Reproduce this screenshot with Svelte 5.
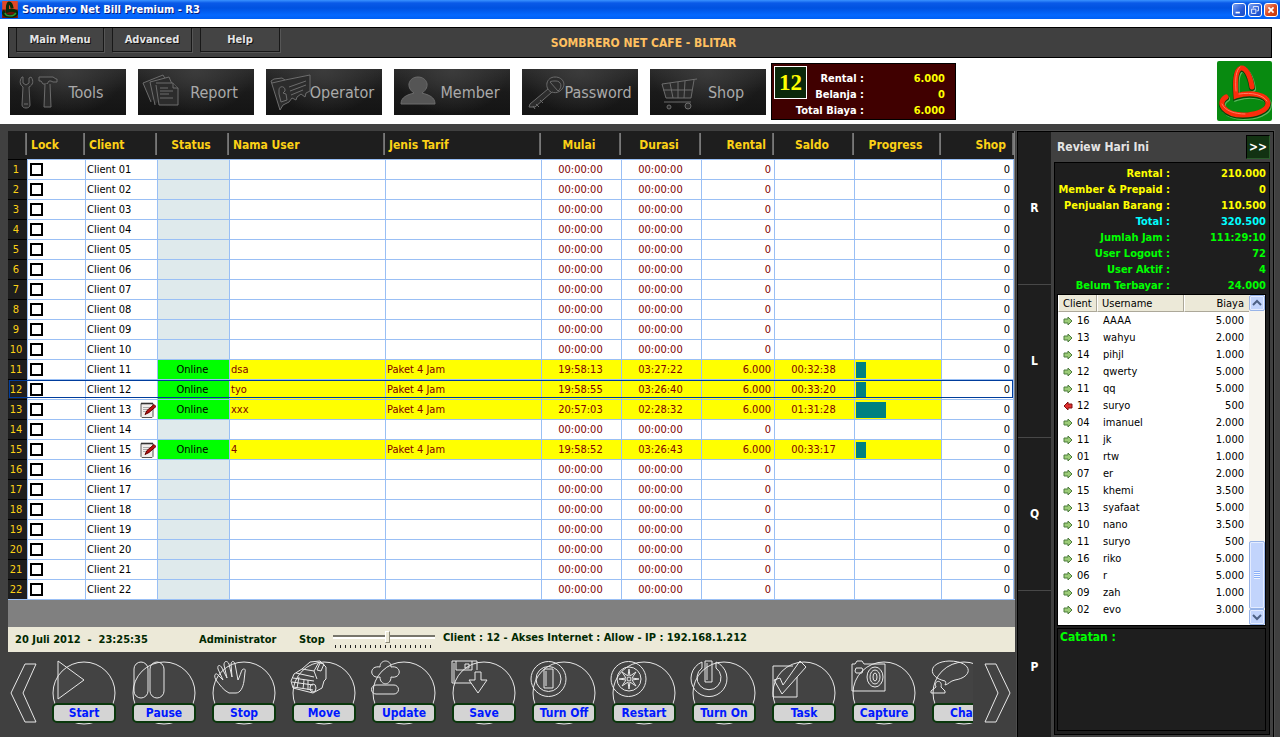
<script lang="ts">
	interface Client {
		lock: boolean;
		name: string;
		note: boolean;
		online: boolean;
		user: string;
		tarif: string;
		mulai: string;
		durasi: string;
		rental: string;
		saldo: string;
		progress: number;
	}

	const active: Record<number, Partial<Client>> = {
		11: { user: 'dsa', mulai: '19:58:13', durasi: '03:27:22', saldo: '00:32:38', progress: 12 },
		12: { user: 'tyo', mulai: '19:58:55', durasi: '03:26:40', saldo: '00:33:20', progress: 12 },
		13: {
			user: 'xxx',
			mulai: '20:57:03',
			durasi: '02:28:32',
			saldo: '01:31:28',
			progress: 36,
			note: true
		},
		15: {
			user: '4',
			mulai: '19:58:52',
			durasi: '03:26:43',
			saldo: '00:33:17',
			progress: 12,
			note: true
		}
	};

	const clients: Client[] = $state(
		Array.from({ length: 22 }, (_, i) => {
			const session = active[i + 1];
			return {
				lock: false,
				name: `Client ${String(i + 1).padStart(2, '0')}`,
				note: false,
				online: !!session,
				user: '',
				tarif: session ? 'Paket 4 Jam' : '',
				mulai: '00:00:00',
				durasi: '00:00:00',
				rental: session ? '6.000' : '0',
				saldo: '',
				progress: 0,
				...session
			};
		})
	);

	let selected = $state(12);
	let volume = $state(54);

	const menus = ['Main Menu', 'Advanced', 'Help'];

	const modules = [
		{
			label: 'Tools',
			paths: [
				'M12 8c-3 4-2 8 1 10l-1 18c0 4 8 4 8 0l-1-18c4-2 5-6 2-10l-2 1v5l-3 2-3-2V8z',
				'M14 35h4',
				'M29 8h14l3 2h1v3h-4l-2-1h-2l-2 3h-4l-2-3h-2z',
				'M35 15l-1 23h7l-1-23'
			]
		},
		{
			label: 'Report',
			paths: [
				'M13 33L5 14l20-8 4 7',
				'M17 36L12 13l19-5 3 7',
				'M18 14h17l5 5v17H21l-3-20',
				'M35 14v5h5M22 19h8M22 22h13M22 25h9M22 29h13'
			]
		},
		{
			label: 'Operator',
			paths: [
				'M5 12l3-2 8-1 3 2 25-5v16l-4 2-1 4-4-3-4 3-1 3-4-2-3 4-6 3-3 5L5 12z',
				'M6 14l13-3M13 21c0-5 7-4 6 1l-2 2 3 1 1 6-6 2-2-8zM23 18l17-6M24 22l16-6M25 26l12-5'
			]
		},
		{
			label: 'Member',
			paths: ['M7 35c0-7 6-9 13-11-9-6-5-16 4-16s13 10 4 16c7 2 13 4 13 11z']
		},
		{
			label: 'Password',
			paths: [
				'M29 23c-7-4-5-15 4-15 9 0 12 9 5 14-3 2-6 2-8 1L13 38l-6 0 1-3 18-15',
				'M28 13l8 9c5-4 3-10-2-10-3 0-5 0-6 1M14 35l3 3M18 31l3 3M11 37l2 3'
			]
		},
		{
			label: 'Shop',
			paths: [
				'M47 10L12 15l4 14h25l3-18M13 21h29M20 14l3 15M28 13v16M35 12l-1 17M14 33h27',
				'M17 38a2 2 0 1 0 4 0a2 2 0 1 0-4 0M35 37a3 3 0 1 0 6 0a3 3 0 1 0-6 0'
			]
		}
	];

	const actions = [
		{ label: 'Start', paths: ['M7 1v38l26-19z'] },
		{
			label: 'Pause',
			paths: [
				'M3 9a7 7 0 0 1 14 0v22a7 7 0 0 1-14 0z',
				'M19 9a7 7 0 0 1 14 0v22a7 7 0 0 1-14 0z'
			]
		},
		{
			label: 'Stop',
			paths: [
				'M18 33C12 30 9 25 5 20C2 15 5 12 7 15L12 20L7 9C6 5 9 4 11 8L16 18L13 5C13 1 16 0 18 4L21 17L20 4C21 0 23 1 24 4L27 20C29 16 30 12 31 10C33 8 35 9 34 12L33 21C32 28 29 33 25 33Z'
			]
		},
		{
			label: 'Move',
			paths: [
				'M11 9L19 2l10-1 6 6v12l-2 2-2 7-9 5-8-2-12-3-2-7 3-7z',
				'M11 9l12 2 5-9M23 11l3 8M26 10l3-7 4 1-3 7zM5 13l18 4M2 18l21 3M1 22l21 3M2 27l20 3',
				'M13 20l-1 9M17 20v10M8 17l-2 11M19 28a3 4 0 1 0 6 0a3 4 0 1 0-6 0'
			]
		},
		{
			label: 'Update',
			paths: [
				'M9 7C9-1 20-1 20 7C31 5 31 19 20 17C20 26 9 26 9 17C-2 19-2 5 9 7Z',
				'M5 25h18a4 4 0 0 1 0 9H5a4 4 0 0 1 0-9z'
			]
		},
		{
			label: 'Save',
			paths: [
				'M26 10V1H1v22h19',
				'M5 1v9h16V1M14 4h4v4h-4z',
				'M24 12h6v8h6l-9 13-9-13h6z',
				'M3 22V3'
			]
		},
		{
			label: 'Turn Off',
			paths: [
				'M0 19a17 17 0 1 0 35 0a17 17 0 1 0-35 0',
				'M5 19a12 12 0 1 0 25 0a12 12 0 1 0-25 0',
				'M13 9h9v19h-9zM15 11v15'
			]
		},
		{
			label: 'Restart',
			paths: [
				'M0 19a17 17 0 1 0 35 0a17 17 0 1 0-35 0',
				'M6 19a12 12 0 1 0 24 0a12 12 0 1 0-24 0',
				'M18 9l1 7 6-4-4 6 7 1-7 1 4 6-6-4-1 7-1-7-6 4 4-6-7-1 7-1-4-6 6 4z',
				'M16 19a2 2 0 1 0 4 0a2 2 0 1 0-4 0'
			]
		},
		{
			label: 'Turn On',
			paths: [
				'M11 2a18 18 0 1 0 14 0v6a12 12 0 1 1-14 0z',
				'M14 1h7v21h-7zM16 3v17'
			]
		},
		{
			label: 'Task',
			paths: ['M22 6H2v31h24V17', 'M29 1l6 6-24 27-8-14 6-2 3 7z']
		},
		{
			label: 'Capture',
			paths: [
				'M1 4h3l2-3h5l2 3h21v27H1z',
				'M5 8h6l1 2-1 3H5l-1-2z',
				'M16 17a8 10 0 1 0 16 0a8 10 0 1 0-16 0',
				'M19 17a5 7 0 1 0 10 0a5 7 0 1 0-10 0M22 17a2 4 0 1 0 4 0a2 4 0 1 0-4 0'
			]
		},
		{
			label: 'Chat',
			paths: [
				'M14 21C-4 17-3 2 18 1c24 0 25 16 6 19-5 1-6 4-10 5 1-2 1-3 0-4z',
				'M5 27c-3-7 7-8 5 0l4 4v2H0v-2z'
			]
		}
	];

	const stats = [
		{ label: 'Rental', value: '210.000', tone: 'yellow' },
		{ label: 'Member & Prepaid', value: '0', tone: 'yellow' },
		{ label: 'Penjualan Barang', value: '110.500', tone: 'yellow' },
		{ label: 'Total', value: '320.500', tone: 'cyan' },
		{ label: 'Jumlah Jam', value: '111:29:10', tone: 'green' },
		{ label: 'User Logout', value: '72', tone: 'green' },
		{ label: 'User Aktif', value: '4', tone: 'green' },
		{ label: 'Belum Terbayar', value: '24.000', tone: 'green' }
	];

	const bills = [
		['16', 'AAAA', '5.000'],
		['13', 'wahyu', '2.000'],
		['14', 'pihjl', '1.000'],
		['12', 'qwerty', '5.000'],
		['11', 'qq', '5.000'],
		['12', 'suryo', '500', 'back'],
		['04', 'imanuel', '2.000'],
		['11', 'jk', '1.000'],
		['01', 'rtw', '1.000'],
		['07', 'er', '2.000'],
		['15', 'khemi', '3.500'],
		['13', 'syafaat', '5.000'],
		['10', 'nano', '3.500'],
		['11', 'suryo', '500'],
		['16', 'riko', '5.000'],
		['06', 'r', '5.000'],
		['09', 'zah', '1.000'],
		['02', 'evo', '3.000']
	];

	const hat =
		'M35 26C33 13 28 6 24 7C18 9 18 22 19 35C34 30 51 34 51 42C51 50 38 54 26 54C8 54-1 42 9 36';
</script>

<div class="page">
	<header class="titlebar">
		<svg class="app-icon" viewBox="0 0 55 60" aria-hidden="true">
			<rect width="55" height="60" fill="#e04828" />
			<rect y="30" width="55" height="30" fill="#701408" />
			<path d={hat} stroke="#062c08" stroke-width="11" />
			<path d="M10 42c2 14 32 14 38 0" stroke="#2c9a35" stroke-width="5" />
		</svg>
		<h1>Sombrero Net Bill Premium - R3</h1>
		<div class="window-buttons">
			<button aria-label="Minimize">
				<svg viewBox="0 0 14 14"><path d="M3 10h5" stroke="#fff" stroke-width="2" /></svg>
			</button>
			<button aria-label="Restore">
				<svg viewBox="0 0 14 14">
					<path d="M5 5V3h6v5H9M3 6h5v5H3z" stroke="#fff" stroke-width="1" />
				</svg>
			</button>
			<button class="close" aria-label="Close">
				<svg viewBox="0 0 14 14">
					<path d="M4 4l6 6M10 4l-6 6" stroke="#fff" stroke-width="2" />
				</svg>
			</button>
		</div>
	</header>

	<div class="top">
		<nav class="menubar">
			<div class="menus">
				{#each menus as menu}
					<button>{menu}</button>
				{/each}
			</div>
			<strong>SOMBRERO NET CAFE - BLITAR</strong>
		</nav>

		<div class="modules">
			{#each modules as item}
				<button class="module">
					<svg viewBox="0 0 48 46" class:solid={item.label === 'Member'} aria-hidden="true">
						{#each item.paths as d}
							<path {d} />
						{/each}
					</svg>
					<span>{item.label}</span>
				</button>
			{/each}

			<section class="bill">
				<div class="bill-client">12</div>
				<dl>
					<dt>Rental :</dt>
					<dd>6.000</dd>
					<dt>Belanja :</dt>
					<dd>0</dd>
					<dt>Total Biaya :</dt>
					<dd>6.000</dd>
				</dl>
			</section>

			<svg class="logo" viewBox="0 0 55 60" role="img" aria-label="Sombrero">
				<rect width="55" height="60" rx="2" fill="#088a10" />
				<path d={hat} stroke="#5cb860" stroke-width="6" transform="translate(1 2)" />
				<path d={hat} stroke="#044808" stroke-width="6" transform="translate(0 1)" />
				<path d={hat} stroke="#fb2c0b" stroke-width="5" />
				<path
					d="M19 30C18 18 19 9 23 6M22 33C36 31 46 34 50 40M5 43C8 50 18 53 28 53"
					stroke="#ff7a60"
					stroke-width="1"
				/>
			</svg>
		</div>
	</div>

	<div class="body">
		<main>
			<table class="clients">
				<colgroup>
					<col class="w-num" />
					<col class="w-lock" />
					<col class="w-client" />
					<col class="w-client" />
					<col />
					<col />
					<col class="w-time" />
					<col class="w-time" />
					<col class="w-rental" />
					<col class="w-time" />
					<col class="w-progress" />
					<col class="w-shop" />
				</colgroup>
				<thead>
					<tr>
						<th></th>
						<th>Lock</th>
						<th>Client</th>
						<th class="center">Status</th>
						<th>Nama User</th>
						<th>Jenis Tarif</th>
						<th class="center">Mulai</th>
						<th class="center">Durasi</th>
						<th class="right">Rental</th>
						<th class="center">Saldo</th>
						<th class="center">Progress</th>
						<th class="right">Shop</th>
					</tr>
				</thead>
				<tbody>
					{#each clients as client, i}
						<tr
							class:online={client.online}
							class:selected={selected === i + 1}
							onclick={() => (selected = i + 1)}
						>
							<th scope="row">{i + 1}</th>
							<td class="lock">
								<input type="checkbox" bind:checked={client.lock} aria-label="Lock {client.name}" />
							</td>
							<td class="name">
								<div>
									{client.name}
									{#if client.note}
										<svg class="note" viewBox="0 0 16 16" aria-hidden="true">
											<path d="M1 2h12v13l-1 1H2l-1-1z" fill="#f2eeec" stroke="#555" />
											<path d="M2 1v2M4 1v2M6 1v2M8 1v2M10 1v2M12 1v2" stroke="#111" />
											<path d="M3 6h7M3 8h5M3 10h3" stroke="#aaa" />
											<path d="M5 13l2-4 7-6 2 2-7 6z" fill="#b81010" stroke="#600" />
										</svg>
									{/if}
								</div>
							</td>
							<td class="status center">{client.online ? 'Online' : ''}</td>
							<td class="data">{client.user}</td>
							<td class="data">{client.tarif}</td>
							<td class="data center">{client.mulai}</td>
							<td class="data center">{client.durasi}</td>
							<td class="data right">{client.rental}</td>
							<td class="data center">{client.saldo}</td>
							<td class="data progress">
								{#if client.progress}
									<div style="width: {client.progress}%"></div>
								{/if}
							</td>
							<td class="right">0</td>
						</tr>
					{/each}
				</tbody>
			</table>

			<div class="filler"></div>

			<footer class="statusbar">
				<span class="clock">20 Juli 2012 &nbsp;- &nbsp;23:25:35</span>
				<span class="operator">Administrator</span>
				<label for="speed">Stop</label>
				<div class="slider">
					<input id="speed" type="range" bind:value={volume} />
				</div>
				<span class="info">Client : 12 - Akses Internet : Allow - IP : 192.168.1.212</span>
			</footer>

			<div class="toolbar">
				<button class="scroll" aria-label="Previous">
					<svg viewBox="0 0 28 62"><path d="M15 2h11L13 31l13 29H15L1 31z" /></svg>
				</button>
				<div class="actions">
					{#each actions as action}
						<button class="action">
							<svg viewBox="0 0 66 66" aria-hidden="true">
								<circle cx="33" cy="33" r="31" />
								{#each action.paths as d}
									<path {d} />
								{/each}
							</svg>
							<span>{action.label}</span>
						</button>
					{/each}
				</div>
				<button class="scroll" aria-label="Next">
					<svg viewBox="0 0 28 62"><path d="M13 2H2l13 29L2 60h11l14-29z" /></svg>
				</button>
			</div>
		</main>

		<aside>
			<div class="rail">
				{#each ['R', 'L', 'Q', 'P'] as tab}
					<button>{tab}</button>
				{/each}
			</div>

			<section class="review">
				<div class="review-head">
					<h2>Review Hari Ini</h2>
					<button>&gt;&gt;</button>
				</div>
				<div class="review-body">
					<dl class="stats">
						{#each stats as stat}
							<dt class={stat.tone}>{stat.label} :</dt>
							<dd class={stat.tone}>{stat.value}</dd>
						{/each}
					</dl>

					<div class="list">
						<table>
							<colgroup>
								<col class="w-no" />
								<col />
								<col class="w-biaya" />
							</colgroup>
							<thead>
								<tr>
									<th>Client</th>
									<th>Username</th>
									<th class="right">Biaya</th>
								</tr>
							</thead>
							<tbody>
								{#each bills as [no, user, biaya, back]}
									<tr>
										<td class="no">
											<svg class:back viewBox="0 0 10 10" aria-hidden="true">
												<path d="M1 3h4V1l4 4-4 4V7H1z" />
											</svg>
											{no}
										</td>
										<td>{user}</td>
										<td class="right">{biaya}</td>
									</tr>
								{/each}
							</tbody>
						</table>
						<div class="scrollbar">
							<button aria-label="Scroll up">
								<svg viewBox="0 0 10 10"><path d="M1 7l4-4 4 4" /></svg>
							</button>
							<div class="track"></div>
							<div class="thumb"></div>
							<button aria-label="Scroll down">
								<svg viewBox="0 0 10 10"><path d="M1 3l4 4 4-4" /></svg>
							</button>
						</div>
					</div>

					<div class="notes">Catatan :</div>
				</div>
			</section>
		</aside>
	</div>
</div>

<style>
	:global(body) {
		margin: 0;
		background: #404040;
	}

	.page,
	.page button {
		font-family: 'DejaVu Sans Condensed', 'Noto Sans', sans-serif;
		font-size: 11px;
	}

	.page {
		display: flex;
		flex-direction: column;
		height: 100vh;
		overflow: hidden;
		color: #000;
	}

	.page * {
		box-sizing: border-box;
	}

	button {
		padding: 0;
		border: 0;
		background: none;
	}

	svg {
		display: block;
		flex: none;
		fill: none;
	}

	dl,
	dd,
	h1,
	h2 {
		margin: 0;
	}

	.center {
		text-align: center;
	}

	.right {
		text-align: right;
	}

	/* title bar */
	.titlebar {
		display: flex;
		align-items: center;
		gap: 4px;
		height: 19px;
		padding: 0 2px;
		background: linear-gradient(#3a93ff, #0a5ae8 3px, #0052e0 8px, #0468ff 15px, #0060f4);
	}

	.app-icon {
		width: 16px;
		height: 17px;
	}

	.titlebar h1 {
		flex: 1;
		color: #fff;
		font-size: 11px;
		line-height: 19px;
		text-shadow: 1px 1px 0 #0a1e80;
	}

	.window-buttons {
		display: flex;
		gap: 2px;
	}

	.window-buttons button {
		width: 14px;
		height: 14px;
		border: 1px solid #fff;
		border-radius: 3px;
		background: linear-gradient(135deg, #7ba2f0, #2459d8 60%, #1c4cc0);
	}

	.window-buttons svg {
		width: 12px;
		height: 12px;
	}

	.window-buttons .close {
		background: linear-gradient(135deg, #f0a088, #dc4a20 50%, #c03808);
	}

	/* menu bar and module buttons */
	.top {
		height: 105px;
		padding: 8px 8px 0;
		background: #fff;
	}

	.menubar {
		display: grid;
		grid-template-columns: 1fr auto 1fr;
		height: 31px;
		padding-left: 7px;
		border: 1px solid #000;
		background: #404040;
	}

	.menubar strong {
		color: #ffc060;
		font-size: 12px;
		line-height: 30px;
	}

	.menus {
		display: flex;
		gap: 8px;
	}

	.menus button {
		width: 80px;
		height: 24px;
		border: 1px solid #181818;
		border-top: 0;
		box-shadow: 1px 1px 0 #565656;
		background: #444;
		color: #e4e4e4;
		font-weight: bold;
		text-shadow: 1px 1px 0 #111;
	}

	.menus button:first-child {
		width: 88px;
	}

	.modules {
		display: flex;
		gap: 12px;
		align-items: flex-start;
		padding: 3px 0 0 2px;
	}

	.module {
		display: flex;
		align-items: center;
		width: 116px;
		height: 46px;
		margin-top: 8px;
		background: radial-gradient(ellipse at 50% 0, #3c3c3c, transparent 70%),
			linear-gradient(#2c2c2c, #1a1a1a 50%, #141414);
	}

	.module svg {
		width: 48px;
		height: 46px;
		margin-right: -6px;
		fill: #2c2c2c;
		stroke: #6c6c6c;
	}

	.module svg.solid {
		fill: #555;
	}

	.module span {
		flex: 1;
		padding-right: 6px;
		color: #aaa;
		font-size: 16px;
		text-align: center;
	}

	.bill {
		display: flex;
		width: 185px;
		height: 57px;
		margin: 2px 0 0 -7px;
		padding: 2px 10px 0 2px;
		border: 1px solid #000;
		background: #400000;
		font-weight: bold;
	}

	.bill-client {
		width: 33px;
		height: 33px;
		border: 1px solid #fff;
		background: #0a280a;
		color: #ff0;
		font: bold 23px/31px 'Liberation Serif', serif;
		text-align: center;
	}

	.bill dl {
		display: grid;
		flex: 1;
		grid-template-columns: 57px 1fr;
		padding-top: 5px;
		line-height: 16px;
		white-space: nowrap;
	}

	.bill dt {
		display: flex;
		justify-content: flex-end;
		color: #fff;
	}

	.bill dd {
		color: #ff0;
		text-align: right;
	}

	.logo {
		width: 55px;
		height: 60px;
		margin-left: auto;
		stroke-linecap: round;
	}

	/* client grid */
	.body {
		display: flex;
		flex: 1;
		min-height: 0;
		padding-top: 7px;
	}

	main {
		display: flex;
		flex: 1;
		flex-direction: column;
		min-width: 0;
		padding-left: 8px;
	}

	table {
		width: 100%;
		table-layout: fixed;
		border-spacing: 0;
	}

	.clients {
		padding-right: 1px;
		border-bottom: 1px solid #99bff5;
		background: #808080;
	}

	.w-num {
		width: 19px;
	}

	.w-lock {
		width: 58px;
	}

	.w-client {
		width: 72px;
	}

	.w-shop,
	.w-rental {
		width: 73px;
	}

	.w-time {
		width: 80px;
	}

	.w-progress {
		width: 87px;
	}

	.clients thead th {
		height: 28px;
		padding: 0 4px;
		background: linear-gradient(90deg, #606060, #808080) no-repeat right 2px / 2px 22px #1e1e1e;
		color: #fcd116;
		font-size: 12px;
		text-align: left;
	}

	.clients thead th.center {
		padding: 0 4px 0 0;
		text-align: center;
	}

	.clients thead th.right {
		padding-right: 8px;
		text-align: right;
	}

	.clients tbody th {
		padding: 0 3px 0 0;
		border-top: 1px solid #000;
		background: #1e1e1e;
		color: #fcd116;
		font-weight: normal;
	}

	.clients td {
		height: 20px;
		padding: 0 3px 0 1px;
		border-top: 1px solid #99bff5;
		border-left: 1px solid #99bff5;
		background: #fff;
		line-height: 18px;
		white-space: nowrap;
	}

	.clients td:last-child {
		border-right: 1px solid #99bff5;
	}

	.clients .lock {
		padding-left: 2px;
	}

	.lock input {
		display: block;
		width: 13px;
		height: 13px;
		margin: 0;
		appearance: none;
		border: 2px solid #000;
		background: #fff;
	}

	.lock input:checked {
		padding: 1px;
		background: #000 content-box;
	}

	.name div {
		display: flex;
		justify-content: space-between;
	}

	.clients .name {
		padding-right: 1px;
	}

	.note {
		width: 16px;
		height: 17px;
	}

	.clients .status {
		background: #dfeaec;
	}

	.clients .data {
		color: #800000;
	}

	.clients .online .status {
		background: #0f0;
	}

	.clients .online .data {
		background: #ff0;
	}

	.progress div {
		height: 16px;
		background: #008080;
	}

	.selected {
		outline: 1px solid #003c9c;
		outline-offset: -2px;
	}

	.filler {
		flex: 1;
		background: #808080;
	}

	/* status bar */
	.statusbar {
		display: flex;
		align-items: center;
		height: 25px;
		padding-left: 7px;
		background: #ece9d8;
		color: #002800;
		font-weight: bold;
		white-space: nowrap;
	}

	.clock {
		width: 184px;
	}

	.operator {
		width: 100px;
	}

	.statusbar label {
		width: 34px;
	}

	.slider {
		width: 102px;
		height: 19px;
		background: repeating-linear-gradient(90deg, #222 0 1px, transparent 1px 5px) no-repeat 2px
			15px / 100px 3px;
	}

	.slider input {
		display: block;
		width: 100%;
		height: 14px;
		margin: 0;
		appearance: none;
		background: linear-gradient(#77756b 0 2px, #fff 2px) no-repeat 0 5px / 100% 4px;
	}

	.slider input::-webkit-slider-thumb {
		width: 5px;
		height: 12px;
		appearance: none;
		border: 1px solid #8a8878;
		border-top-color: #fff;
		border-left-color: #fff;
		background: #ece9d8;
	}

	.info {
		margin: -4px 0 0 8px;
	}

	/* action toolbar */
	.toolbar {
		display: flex;
		height: 85px;
		padding-right: 2px;
	}

	.scroll {
		width: 32px;
		padding: 10px 0 0 2px;
		align-self: flex-start;
	}

	.scroll svg {
		width: 28px;
		height: 62px;
	}

	.toolbar svg {
		overflow: visible;
		fill: rgb(255 255 255 / 2%);
		stroke: #e8e8e8;
	}

	.actions {
		display: flex;
		flex: 1;
		gap: 14px;
		min-width: 0;
		margin: 0 8px 0 11px;
		padding-top: 8px;
		overflow: hidden;
	}

	.action {
		position: relative;
		flex: none;
		width: 66px;
		height: 66px;
	}

	.action svg {
		width: 66px;
		height: 66px;
	}

	.action span {
		position: absolute;
		right: 1px;
		bottom: 3px;
		left: 1px;
		border: 2px solid #0a380c;
		border-radius: 5px;
		background: #d4d4d4;
		color: #0018ff;
		font-size: 12px;
		font-weight: bold;
		line-height: 16px;
	}

	/* right side */
	aside {
		display: flex;
		width: 257px;
		margin: 0 6px 0 2px;
		border: 1px solid #000;
		border-width: 1px 1px 0;
		outline: 1px solid #4c4c4c;
	}

	.rail {
		width: 33px;
		overflow: hidden;
		background: #1e1e1e;
	}

	.rail button {
		display: block;
		width: 100%;
		height: 153px;
		border-bottom: 1px solid #484848;
		color: #fff;
		font-size: 12px;
		font-weight: bold;
	}

	.review {
		display: flex;
		flex: 1;
		flex-direction: column;
		padding: 0 3px 2px;
		background: #404040;
	}

	.review-head {
		display: flex;
		align-items: center;
		justify-content: space-between;
		height: 30px;
		padding: 0 0 0 3px;
	}

	.review-head h2 {
		color: #e4e4e4;
		font-size: 12px;
	}

	.review-head button {
		width: 24px;
		height: 24px;
		border: 1px solid #000;
		border-right-color: #2a5a2a;
		border-bottom-color: #2a5a2a;
		background: #123212;
		color: #fff;
		font-size: 12px;
		font-weight: bold;
	}

	.review-body {
		display: flex;
		flex: 1;
		flex-direction: column;
		padding: 3px 3px 3px 2px;
		border: 1px solid #000;
		background: #1e1e1e;
	}

	.stats {
		display: grid;
		grid-template-columns: 113px 1fr;
		font-weight: bold;
		line-height: 16px;
		text-align: right;
		white-space: nowrap;
	}

	.stats dt {
		display: flex;
		justify-content: flex-end;
	}

	.yellow {
		color: #ff0;
	}

	.cyan {
		color: #0ff;
	}

	.green {
		color: #0f0;
	}

	.list {
		display: flex;
		align-items: stretch;
		height: 332px;
		border: 1px solid #000;
		background: #fff;
	}

	.list table {
		flex: 1;
		align-self: flex-start;
	}

	.w-no {
		width: 39px;
	}

	.w-biaya {
		width: 65px;
	}

	.list th {
		height: 17px;
		padding: 1px 4px 0;
		border-right: 1px solid #aca899;
		border-bottom: 1px solid #aca899;
		border-left: 1px solid #fff;
		background: #ece9d8;
		font-weight: normal;
		line-height: 15px;
		text-align: left;
	}

	.list th.right {
		padding-right: 5px;
		border-right: 0;
		text-align: right;
	}

	.list td {
		height: 17px;
		padding: 0 5px 0 6px;
		line-height: 17px;
		white-space: nowrap;
	}

	.list .no {
		display: flex;
		gap: 4px;
		align-items: center;
		padding: 0 0 0 5px;
	}

	.no svg {
		width: 10px;
		height: 10px;
		fill: #9ccc78;
		stroke: #4c7c3c;
	}

	.no svg.back {
		transform: scaleX(-1);
		fill: #e03030;
		stroke: #801010;
	}

	.scrollbar {
		display: flex;
		flex-direction: column;
		width: 16px;
		background: #f6f4ee;
	}

	.scrollbar button,
	.thumb {
		display: grid;
		place-items: center;
		height: 16px;
		border: 1px solid #98b4e8;
		border-radius: 2px;
		background: #c2d4fc;
		box-shadow: inset 0 0 0 1px #e4ecff;
	}

	.scrollbar svg {
		width: 10px;
		height: 10px;
		stroke: #4d6185;
		stroke-width: 2;
	}

	.track {
		flex: 1;
	}

	.thumb {
		height: 68px;
	}

	.thumb::after {
		width: 6px;
		height: 8px;
		background: repeating-linear-gradient(#8cb0f8 0 1px, #eef4ff 1px 2px);
		content: '';
	}

	.notes {
		flex: 1;
		margin-top: 2px;
		padding: 1px 2px;
		border: 1px solid #000;
		color: #0f0;
		font-size: 12px;
		font-weight: bold;
	}
</style>
